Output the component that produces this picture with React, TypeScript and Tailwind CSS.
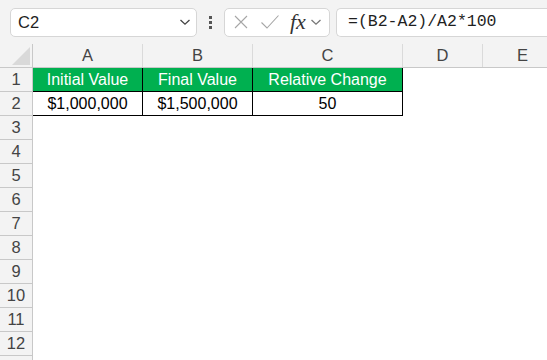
import React from 'react';

const cols = [
  { key: 'A', w: 'w-[110px]' },
  { key: 'B', w: 'w-[110px]' },
  { key: 'C', w: 'w-[150px]' },
  { key: 'D', w: 'w-[80px]' },
  { key: 'E', w: 'w-[80px]' },
];

const tableRows: string[][] = [
  ['Initial Value', 'Final Value', 'Relative Change'],
  ['$1,000,000', '$1,500,000', '50'],
];

function Chevron({ className }: { className?: string }) {
  return (
    <svg width="12" height="8" viewBox="0 0 12 8" className={className} fill="none">
      <path d="M1.5 2 L6 6.2 L10.5 2" stroke="currentColor" strokeWidth="1.3" />
    </svg>
  );
}

function TopBar() {
  return (
    <div className="flex h-[44px] items-center bg-[#f3f3f3] pl-[10px]">
      <div className="flex h-[29px] w-[187px] items-center justify-between rounded-[5px] border border-[#d6d6d6] bg-white pl-[7px] pr-[5px]">
        <span className="text-[16.5px] text-[#1f1f1f]">C2</span>
        <Chevron className="text-[#444]" />
      </div>
      <div className="flex w-[27px] flex-col items-center justify-center gap-[2px]">
        <span className="h-[3px] w-[3px] bg-[#555]" />
        <span className="h-[3px] w-[3px] bg-[#555]" />
        <span className="h-[3px] w-[3px] bg-[#555]" />
      </div>
      <div className="flex h-[29px] w-[106px] items-center rounded-[5px] border border-[#d6d6d6] bg-white pl-[8px]">
        <svg width="16" height="16" viewBox="0 0 16 16" fill="none">
          <path d="M2 2 L14 14 M14 2 L2 14" stroke="#a6a6a6" strokeWidth="1.1" />
        </svg>
        <svg width="20" height="16" viewBox="0 0 20 16" className="ml-[11px]" fill="none">
          <path d="M1.5 8.5 L7 14 L18.5 1.5" stroke="#a6a6a6" strokeWidth="1.1" />
        </svg>
        <span className="ml-[10px] font-['Liberation_Serif',serif] text-[22px] italic leading-none text-[#333]">fx</span>
        <Chevron className="ml-[4px] text-[#777]" />
      </div>
      <div className="ml-[6px] flex h-[29px] flex-1 items-center rounded-l-[5px] border border-r-0 border-[#d6d6d6] bg-white pl-[11px]">
        <span className="font-['Liberation_Mono',monospace] text-[16.5px] text-[#1f1f1f]">=(B2-A2)/A2*100</span>
      </div>
    </div>
  );
}

function HeaderRow() {
  return (
    <div className="flex h-[24px] border-b border-[#c8c8c8] bg-[#f3f3f3]">
      <div className="relative w-[33px] shrink-0 border-r border-[#c8c8c8]">
        <svg width="18" height="18" viewBox="0 0 18 18" className="absolute bottom-[2px] right-[2px]">
          <path d="M18 0 L18 18 L0 18 Z" fill="#d9d9d9" />
        </svg>
      </div>
      {cols.map((c) => (
        <div
          key={c.key}
          className={`${c.w} flex shrink-0 items-center justify-center border-r border-[#dadada] text-[16.5px] text-[#444]`}
        >
          {c.key}
        </div>
      ))}
    </div>
  );
}

function Row({ n }: { n: number }) {
  const data = tableRows[n - 1];
  return (
    <div className="flex h-[24px]">
      <div className="flex w-[33px] shrink-0 items-center justify-center border-r border-b border-[#c8c8c8] bg-[#f3f3f3] text-[16.5px] text-[#444]">
        {n <= 12 ? n : ''}
      </div>
      {cols.map((c, i) => {
        const cell = data && i < 3 ? data[i] : null;
        if (cell === null) return <div key={c.key} className={`${c.w} shrink-0`} />;
        const head = n === 1;
        return (
          <div
            key={c.key}
            className={`${c.w} flex shrink-0 items-center justify-center border-r border-b border-black ${
              head ? 'bg-[#00b050] text-white' : 'bg-white text-black'
            } text-[16px]`}
          >
            {cell}
          </div>
        );
      })}
    </div>
  );
}

export default function App() {
  return (
    <div className="h-[360px] w-[547px] overflow-hidden bg-white font-['Liberation_Sans',Arial,sans-serif]">
      <TopBar />
      <HeaderRow />
      {Array.from({ length: 13 }, (_, i) => (
        <Row key={i} n={i + 1} />
      ))}
    </div>
  );
}
